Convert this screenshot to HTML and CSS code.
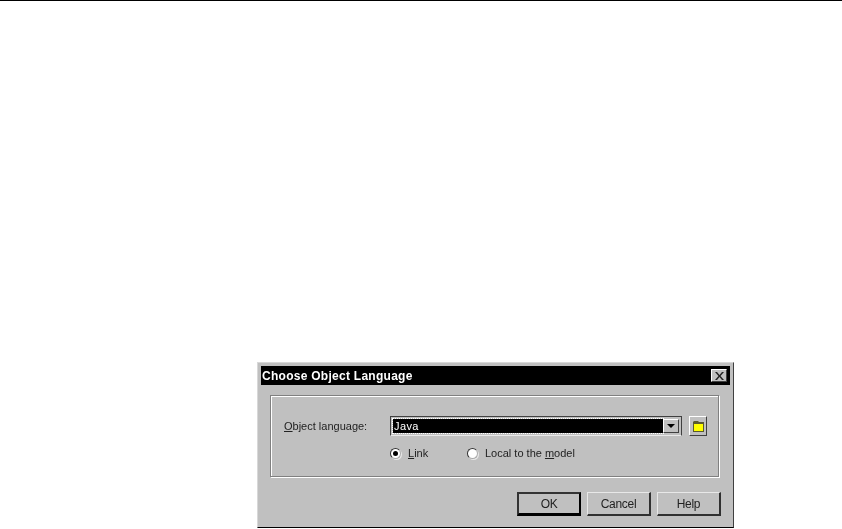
FILE: index.html
```html
<!DOCTYPE html>
<html>

<head>
    <title>Choose Object Language</title>
    <link rel="stylesheet" href="styles.css">
</head>

<body>

    <div class="top-rule"></div>

    <div class="dialog">
        <div class="title-bar">
            <span class="title-text">Choose Object Language</span>
            <span class="close-button">
                <svg viewBox="0 0 9 8" width="9" height="8">
                    <path d="M0 0h2l2.500 3 2.500-3h2l-3.500 4 3.500 4h-2l-2.500-3-2.500 3h-2l3.500-4z" fill="#222" />
                </svg>
            </span>
        </div>

        <div class="group-box">
            <div class="language-row">
                <span class="field-label"><u>O</u>bject language:</span>
                <div class="combo">
                    <div class="combo-text"><span>Java</span></div>
                    <div class="combo-arrow"><span class="arrow-down"></span></div>
                </div>
                <div class="folder-button">
                    <svg viewBox="0 0 11 11" width="11" height="11">
                        <path d="M0 11v-10l1-1h4l1 1h5v10z" fill="#5a5a30" />
                        <rect x="1" y="3" width="9" height="7" fill="#ffff00" />
                    </svg>
                </div>
            </div>
            <div class="radio-row">
                <label class="radio-item radio-link"><span class="radio checked"></span><span><u>L</u>ink</span></label>
                <label class="radio-item"><span class="radio"></span><span>Local to the <u>m</u>odel</span></label>
            </div>
        </div>

        <div class="buttons-container">
            <button class="button default-button">OK</button>
            <button class="button">Cancel</button>
            <button class="button">Help</button>
        </div>
    </div>

</body>

</html>
```

FILE: styles.css
```css
body {
    font-family: 'Liberation Sans', Arial, sans-serif;
    font-size: 11px;
    margin: 0;
    padding: 0;
    background-color: #ffffff;
    color: #000;
}

.top-rule {
    height: 1px;
    background-color: #000;
}

.dialog {
    box-sizing: border-box;
    width: 477px;
    height: 166px;
    margin: 361px 0 0 257px;
    padding: 3px;
    background-color: #c0c0c0;
    border-top: 1px solid #d8d8d8;
    border-left: 1px solid #d8d8d8;
    border-right: 1px solid #404040;
    border-bottom: 1px solid #000;
    filter: blur(0.35px);
}

.title-bar {
    display: flex;
    align-items: center;
    justify-content: space-between;
    height: 19px;
    padding: 0 3px 0 1px;
    background-color: #000;
    color: #fff;
    font-size: 12px;
    font-weight: bold;
    letter-spacing: 0.27px;
}

.close-button {
    display: flex;
    align-items: center;
    justify-content: center;
    width: 16px;
    height: 13px;
    background-color: #c0c0c0;
    border-top: 1px solid #fff;
    border-left: 1px solid #fff;
    border-right: 1px solid #404040;
    border-bottom: 1px solid #404040;
    box-sizing: border-box;
}

.group-box {
    box-sizing: border-box;
    width: 449px;
    height: 82px;
    margin: 10px 0 0 9px;
    padding: 20px 0 0 13px;
    border: 1px solid #808080;
    box-shadow: 1px 1px 0 #fff, inset 1px 1px 0 #fff;
}

.language-row {
    display: flex;
    align-items: center;
    height: 20px;
}

.field-label {
    width: 106px;
    color: #222;
}

.combo {
    box-sizing: border-box;
    display: flex;
    width: 292px;
    height: 20px;
    padding: 2px;
    background-color: #c0c0c0;
    border-top: 1px solid #404040;
    border-left: 1px solid #404040;
    border-right: 1px solid #404040;
    border-bottom: 1px solid #e8e8e8;
}

.combo-text {
    flex: 1;
    display: flex;
    align-items: center;
    padding-left: 1px;
    background-color: #000;
    color: #fff;
    letter-spacing: 0.4px;
    outline: 1px dotted #fff;
}

.combo-arrow {
    display: flex;
    align-items: center;
    justify-content: center;
    width: 16px;
    background-color: #c0c0c0;
    border-top: 1px solid #fff;
    border-left: 1px solid #fff;
    border-right: 1px solid #404040;
    border-bottom: 1px solid #404040;
    box-sizing: border-box;
}

.arrow-down {
    width: 0;
    height: 0;
    border-left: 4px solid transparent;
    border-right: 4px solid transparent;
    border-top: 4px solid #000;
}

.folder-button {
    box-sizing: border-box;
    display: flex;
    align-items: center;
    justify-content: center;
    width: 18px;
    height: 20px;
    margin-left: 7px;
    background-color: #c0c0c0;
    border-top: 1px solid #fff;
    border-left: 1px solid #fff;
    border-right: 1px solid #404040;
    border-bottom: 1px solid #404040;
}

.radio-row {
    display: flex;
    align-items: center;
    margin: 11px 0 0 106px;
}

.radio-item {
    display: flex;
    align-items: center;
    gap: 7px;
    color: #222;
}

.radio-link {
    width: 77px;
}

.radio {
    box-sizing: border-box;
    display: flex;
    align-items: center;
    justify-content: center;
    width: 11px;
    height: 11px;
    border-radius: 50%;
    background-color: #fff;
    border: 1px solid;
    border-color: #333 #aaa #aaa #333;
    box-shadow: 1px 1px 0 #e8e8e8;
}

.radio.checked::after {
    content: "";
    width: 5px;
    height: 5px;
    border-radius: 50%;
    background-color: #000;
}

.buttons-container {
    display: flex;
    justify-content: flex-end;
    gap: 6px;
    margin: 15px 9px 0 0;
}

.button {
    box-sizing: border-box;
    width: 64px;
    height: 24px;
    padding: 0;
    font-family: inherit;
    font-size: 12px;
    letter-spacing: -0.3px;
    color: #222;
    background-color: #c0c0c0;
    border-top: 1px solid #e8e8e8;
    border-left: 1px solid #e8e8e8;
    border-right: 2px solid #303030;
    border-bottom: 2px solid #303030;
}

.default-button {
    border: 2px solid #000;
    border-right-width: 2px;
    border-bottom-width: 3px;
    border-top-color: #333;
    border-left-color: #333;
}
```
